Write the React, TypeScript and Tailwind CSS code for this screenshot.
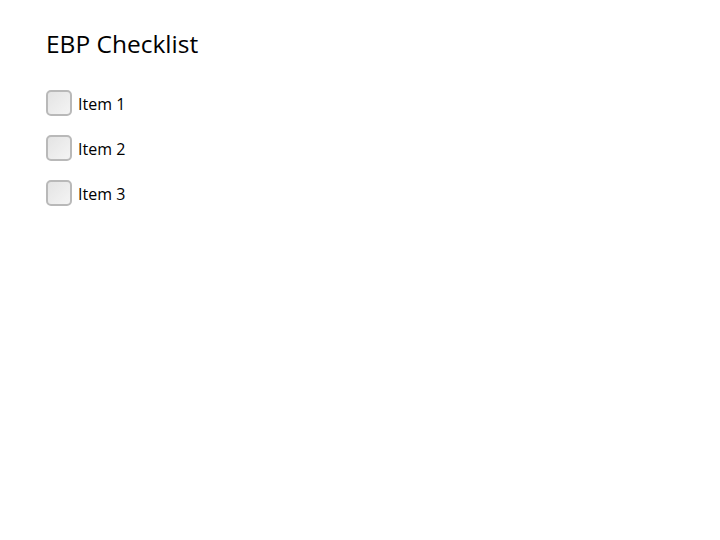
export default function App() {
  const items = ["Item 1", "Item 2", "Item 3"];
  return (
    <div className="min-h-[540px] bg-white pl-[46px] pt-[28px] text-black" style={{ fontFamily: '"Open Sans", sans-serif' }}>
      <h1 className="text-[24.5px] leading-[32px]">EBP Checklist</h1>
      <div className="mt-[30px] flex flex-col gap-[19px]">
        {items.map((item) => (
          <label key={item} className="flex items-center gap-[6px] text-[16px] leading-[26px]">
            <span className="h-[26px] w-[26px] rounded-[5px] border-2 border-[#b9b9b9] bg-gradient-to-br from-[#e4e4e4] to-[#f4f4f4]" />
            <span className="translate-y-[1px]">{item}</span>
          </label>
        ))}
      </div>
    </div>
  );
}
